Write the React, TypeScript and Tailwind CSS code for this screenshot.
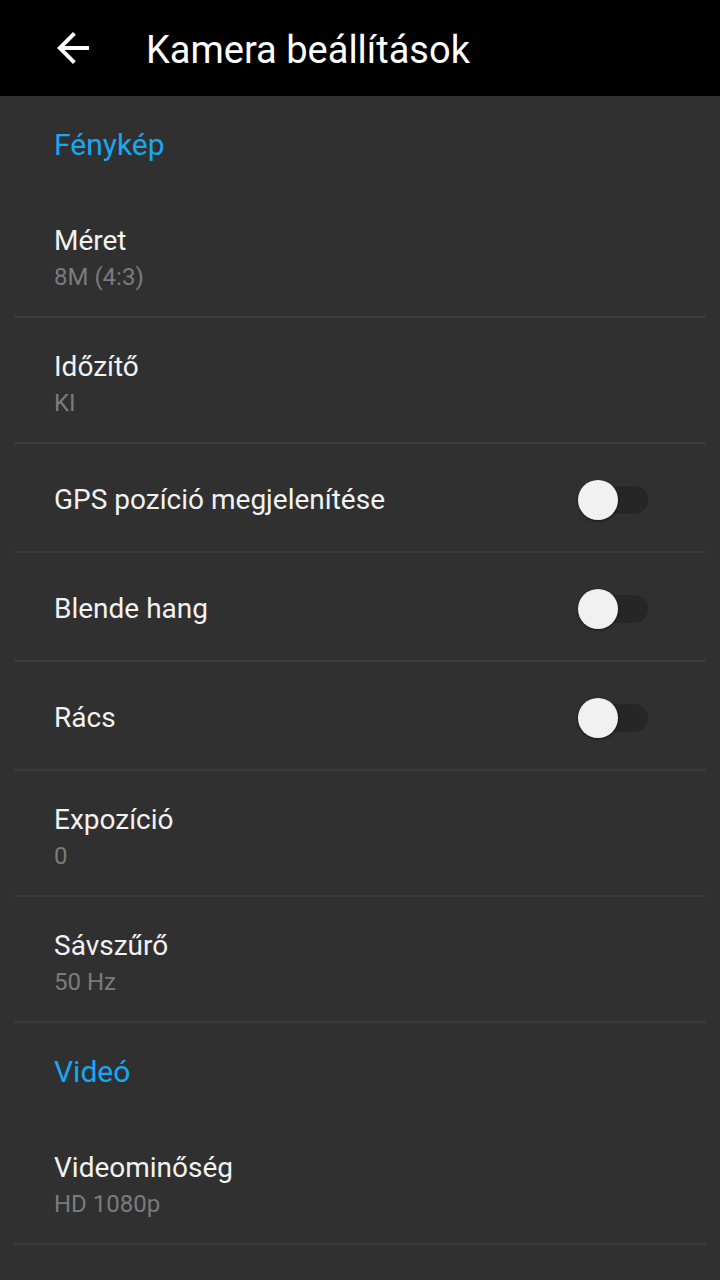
import React from "react";

type Row =
  | { kind: "value"; title: string; value: string }
  | { kind: "toggle"; title: string };

const photo: Row[] = [
  { kind: "value", title: "Méret", value: "8M (4:3)" },
  { kind: "value", title: "Időzítő", value: "KI" },
  { kind: "toggle", title: "GPS pozíció megjelenítése" },
  { kind: "toggle", title: "Blende hang" },
  { kind: "toggle", title: "Rács" },
  { kind: "value", title: "Expozíció", value: "0" },
  { kind: "value", title: "Sávszűrő", value: "50 Hz" },
];

const video: Row[] = [{ kind: "value", title: "Videominőség", value: "HD 1080p" }];

function Toggle() {
  return (
    <div className="relative h-[40px] w-[70px]">
      <div className="absolute left-[2px] right-0 top-[6px] h-[28px] rounded-full bg-[#262626]" />
      <div className="absolute left-0 top-0 h-[40px] w-[40px] rounded-full bg-[#f1f1f1] shadow-[0_1px_3px_rgba(0,0,0,0.5)]" />
    </div>
  );
}

function Divider() {
  return <div className="mx-[14px] h-[2px] bg-[#3a3a3a]" />;
}

function SettingRow({ row }: { row: Row }) {
  if (row.kind === "toggle") {
    return (
      <>
        <div className="flex h-[107px] items-center justify-between pl-[54px] pr-[72px] pt-[4px]">
          <span className="text-[28px] leading-[36px] text-[#f2f2f2]">{row.title}</span>
          <Toggle />
        </div>
        <Divider />
      </>
    );
  }
  return (
    <>
      <div className="flex h-[124px] flex-col pl-[54px] pt-[31px]">
        <span className="text-[28px] leading-[36px] text-[#f2f2f2]">{row.title}</span>
        <span className="text-[24px] leading-[36px] text-[#7b7b7b]">{row.value}</span>
      </div>
      <Divider />
    </>
  );
}

function Section({ title, rows }: { title: string; rows: Row[] }) {
  return (
    <div>
      <div className="flex h-[96px] items-center pl-[54px] pt-[2px]">
        <span className="text-[30px] leading-[36px] text-[#16a8f2]">{title}</span>
      </div>
      {rows.map((r) => (
        <SettingRow key={r.title} row={r} />
      ))}
    </div>
  );
}

export default function App() {
  return (
    <div className="min-h-[1280px] bg-[#303030] font-['Roboto',sans-serif]">
      <div className="flex h-[96px] items-center bg-black">
        <svg viewBox="0 0 24 24" className="ml-[49px] h-[48px] w-[48px]" fill="#ffffff">
          <path d="M20 11H7.83l5.59-5.59L12 4l-8 8 8 8 1.41-1.41L7.83 13H20v-2z" />
        </svg>
        <span className="ml-[49px] pt-[4px] text-[38px] leading-[48px] text-white">Kamera beállítások</span>
      </div>
      <Section title="Fénykép" rows={photo} />
      <Section title="Videó" rows={video} />
    </div>
  );
}
